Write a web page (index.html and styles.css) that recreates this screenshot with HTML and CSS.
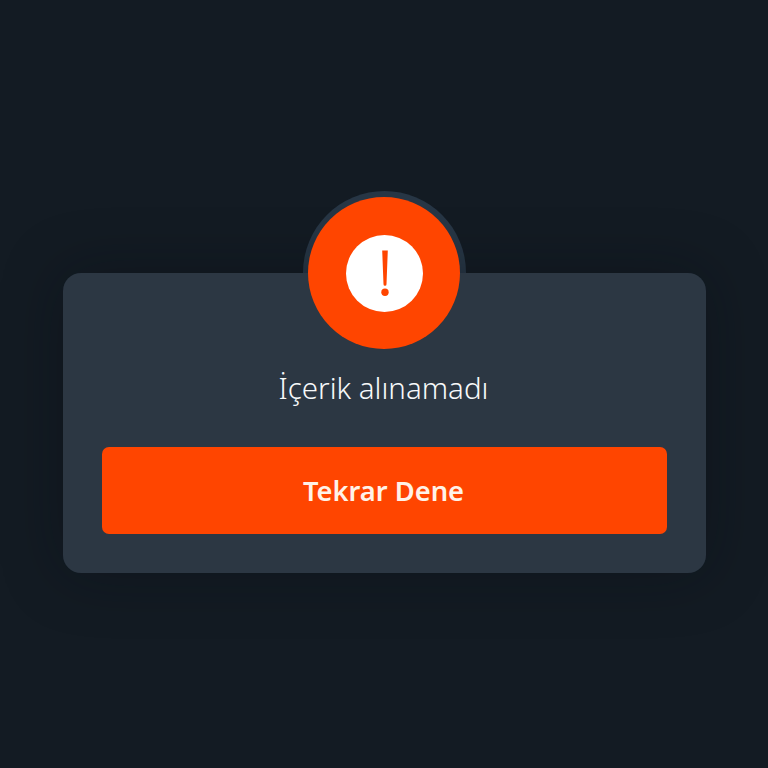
FILE: index.html
```html
<!DOCTYPE html>
<html lang="tr">
<head>
<meta charset="utf-8">
<title>İçerik alınamadı</title>
<link rel="stylesheet" href="styles.css">
</head>
<body>
<main class="screen">
  <section class="card">
    <div class="badge">
      <div class="badge-disc">
        <svg class="badge-icon" width="77" height="77" viewBox="0 0 77 77" aria-hidden="true">
          <circle cx="38.5" cy="38.5" r="38.5" fill="#fff"/>
          <path d="M36.2 15.4h5.6l-1.3 33.8a1.5 1.5 0 0 1-3 0z" fill="#ff4500"/>
          <circle cx="39" cy="57.2" r="3.7" fill="#ff4500"/>
        </svg>
      </div>
    </div>
    <p class="message">İçerik alınamadı</p>
    <button class="retry" type="button">Tekrar Dene</button>
  </section>
</main>
</body>
</html>
```
FILE: styles.css
```css
* { box-sizing: border-box; }
html, body { margin: 0; height: 100%; }
body {
  background: #131b23;
  font-family: "Noto Sans", "Open Sans", sans-serif;
  overflow: hidden;
}
.screen {
  height: 768px;
  display: flex;
  justify-content: center;
  padding: 273px 0 0 1px;
}
.card {
  position: relative;
  width: 643px;
  height: 300px;
  background: #2c3743;
  border-radius: 18px;
  padding: 93px 39px 39px;
  box-shadow: 0 0 60px rgba(8, 12, 16, 0.35);
  display: flex;
  flex-direction: column;
  align-items: stretch;
}
.badge {
  position: absolute;
  left: 50%;
  top: -76px;
  width: 152px;
  height: 152px;
  margin-left: -76.5px;
}
.badge::before {
  content: "";
  position: absolute;
  inset: -6px -6px -6px -5.5px;
  border-radius: 50%;
  background: #273645;
  z-index: -1;
}
.badge-disc {
  position: relative;
  width: 152px;
  height: 152px;
  border-radius: 50%;
  background: #ff4500;
  display: flex;
  align-items: center;
  justify-content: center;
}
.badge-icon { display: block; }
.message {
  margin: 0;
  height: 44px;
  line-height: 44px;
  padding-right: 2px;
  text-align: center;
  font-size: 29.5px;
  font-weight: 300;
  color: #f7f9fa;
}
.retry {
  margin-top: 37px;
  height: 87px;
  border: 0;
  border-radius: 7px;
  background: #ff4500;
  color: #fff2e8;
  font: 600 27.3px "Noto Sans", "Open Sans", sans-serif;
  padding: 0 2px 0 0;
}
```
